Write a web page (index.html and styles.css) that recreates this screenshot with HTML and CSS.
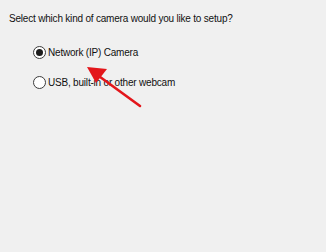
FILE: index.html
```html
<!DOCTYPE html>
<html>
<head>
<meta charset="utf-8">
<link rel="stylesheet" href="styles.css">
</head>
<body>
<div class="page">
  <p class="prompt">Select which kind of camera would you like to setup?</p>
  <div class="options">
    <label class="option"><span class="radio checked"></span><span class="label">Network (IP) Camera</span></label>
    <label class="option"><span class="radio"></span><span class="label">USB, built-in or other webcam</span></label>
  </div>
  <svg class="arrow" width="326" height="252" viewBox="0 0 326 252">
    <line x1="140" y1="106" x2="96" y2="74" stroke="#e3161b" stroke-width="2.6" stroke-linecap="round"/>
    <polygon points="87,67 107,69 96,83" fill="#e3161b"/>
  </svg>
</div>
</body>
</html>
```
FILE: styles.css
```css
html, body {
  margin: 0;
  padding: 0;
  background: #f0f0f0;
}
.page {
  position: relative;
  width: 326px;
  height: 252px;
  font-family: "Liberation Sans", Arial, sans-serif;
  font-size: 10px;
  letter-spacing: -0.2px;
  color: #111;
}
.prompt {
  margin: 0;
  padding: 12px 0 0 9px;
  line-height: 13px;
}
.options {
  display: flex;
  flex-direction: column;
  gap: 17px;
  padding: 21px 0 0 33px;
}
.option {
  display: flex;
  align-items: center;
  gap: 2px;
  height: 13px;
}
.radio {
  width: 11px;
  height: 11px;
  border: 1px solid #3c3c3c;
  border-radius: 50%;
  background: #fff;
  display: flex;
  align-items: center;
  justify-content: center;
}
.radio.checked::after {
  content: "";
  width: 7px;
  height: 7px;
  border-radius: 50%;
  background: #1c1c1c;
}
.arrow {
  position: absolute;
  left: 0;
  top: 0;
}
```
